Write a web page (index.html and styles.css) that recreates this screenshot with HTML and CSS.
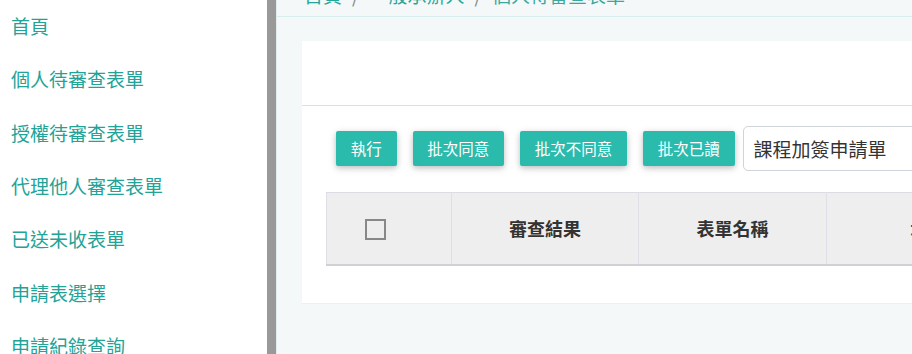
FILE: index.html
```html
<!DOCTYPE html>
<html lang="zh-Hant">
<head>
<meta charset="utf-8">
<title>個人待審查表單</title>
<link rel="stylesheet" href="styles.css">
</head>
<body>
<div class="app">
  <nav class="sidebar">
    <ul class="menu">
      <li><a href="#">首頁</a></li>
      <li><a href="#">個人待審查表單</a></li>
      <li><a href="#">授權待審查表單</a></li>
      <li><a href="#">代理他人審查表單</a></li>
      <li><a href="#">已送未收表單</a></li>
      <li><a href="#">申請表選擇</a></li>
      <li><a href="#">申請紀錄查詢</a></li>
    </ul>
  </nav>
  <div class="scrollbar"></div>
  <main class="main">
    <div class="breadcrumb">
      <div class="crumbs">
        <a href="#">首頁</a><span class="sep">/</span><a href="#">一般承辦人</a><span class="sep">/</span><span class="current">個人待審查表單</span>
      </div>
    </div>
    <section class="card">
      <div class="card-header"></div>
      <div class="card-body">
        <div class="toolbar">
          <button class="btn">執行</button>
          <button class="btn">批次同意</button>
          <button class="btn">批次不同意</button>
          <button class="btn">批次已讀</button>
          <div class="select">課程加簽申請單</div>
        </div>
        <table class="table">
          <thead>
            <tr>
              <th class="col-check"><span class="checkbox"></span></th>
              <th class="col-result">審查結果</th>
              <th class="col-name">表單名稱</th>
              <th class="col-date">填表日期</th>
              <th class="col-more">申請人</th>
            </tr>
          </thead>
        </table>
      </div>
    </section>
  </main>
</div>
</body>
</html>
```

FILE: styles.css
```css
html, body {
  margin: 0;
  padding: 0;
  height: 354px;
  overflow: hidden;
  font-family: "Noto Sans CJK TC", "Noto Sans", sans-serif;
}

.app {
  display: flex;
  height: 354px;
  overflow: hidden;
}

.sidebar {
  width: 267px;
  flex-shrink: 0;
  background: #ffffff;
  overflow: hidden;
}

.menu {
  list-style: none;
  margin: -1px 0 0 0;
  padding: 0;
}

.menu li {
  height: 53.33px;
  line-height: 53.33px;
}

.menu a {
  display: block;
  padding-left: 11px;
  font-size: 19px;
  color: #23a398;
  text-decoration: none;
  white-space: nowrap;
}

.scrollbar {
  width: 9px;
  flex-shrink: 0;
  background: #999999;
}

.main {
  flex: 1;
  min-width: 0;
  background: #f4f8f8;
  border-left: 1px solid #e4eded;
  overflow: hidden;
}

.breadcrumb {
  height: 16px;
  border-bottom: 1px solid #d6efed;
  overflow: hidden;
  padding-left: 27px;
}

.crumbs {
  margin-top: -15px;
  line-height: 19px;
  font-size: 19px;
  white-space: nowrap;
  color: #26a69a;
}

.crumbs a {
  color: #26a69a;
  text-decoration: none;
}

.crumbs .sep {
  color: #7d8c8c;
  padding: 0 10px;
}

.crumbs .current {
  color: #3aa89e;
}

.card {
  margin: 24px 0 0 25px;
  width: 1100px;
  background: #ffffff;
  box-shadow: 0 1px 1px rgba(0, 0, 0, 0.03);
}

.card-header {
  height: 64px;
  border-bottom: 1px solid #e0e0e0;
}

.card-body {
  padding: 20px 24px 37px 24px;
}

.toolbar {
  display: flex;
  align-items: center;
  height: 45px;
}

.btn {
  height: 35px;
  margin: 0 6px 0 10px;
  padding: 0 14.75px;
  border: none;
  border-radius: 2px;
  background: #2bbbad;
  color: #ffffff;
  font-family: "Noto Sans CJK TC", sans-serif;
  font-size: 15.5px;
  line-height: 35px;
  box-shadow: 0 2px 5px rgba(0, 0, 0, 0.16), 0 2px 10px rgba(0, 0, 0, 0.12);
  cursor: pointer;
  white-space: nowrap;
}

.select {
  margin-left: 2px;
  width: 400px;
  height: 43px;
  line-height: 43px;
  border: 1px solid #cfd4da;
  border-radius: 5px;
  padding-left: 10px;
  font-size: 19px;
  color: #333333;
  background: #ffffff;
  white-space: nowrap;
}

.table {
  margin-top: 21px;
  border-collapse: collapse;
  table-layout: fixed;
  width: 940px;
}

.table th {
  box-sizing: border-box;
  height: 72px;
  background: #eeeeee;
  border-top: 1px solid #dcdce4;
  border-bottom: 2px solid #cfcfd4;
  border-left: 1px solid #dfdfe8;
  border-right: 1px solid #dfdfe8;
  font-size: 18px;
  font-weight: bold;
  color: #333333;
  text-align: center;
  padding: 0;
  white-space: nowrap;
}

.table th.col-check {
  width: 125px;
  text-align: left;
  padding-left: 38px;
}

.table th.col-result { width: 187px; }
.table th.col-name { width: 188px; }
.table th.col-date { width: 240px; }
.table th.col-more { width: 200px; }

.checkbox {
  display: block;
  width: 17px;
  height: 17px;
  border: 2px solid #888888;
  margin-top: 2px;
}
```
